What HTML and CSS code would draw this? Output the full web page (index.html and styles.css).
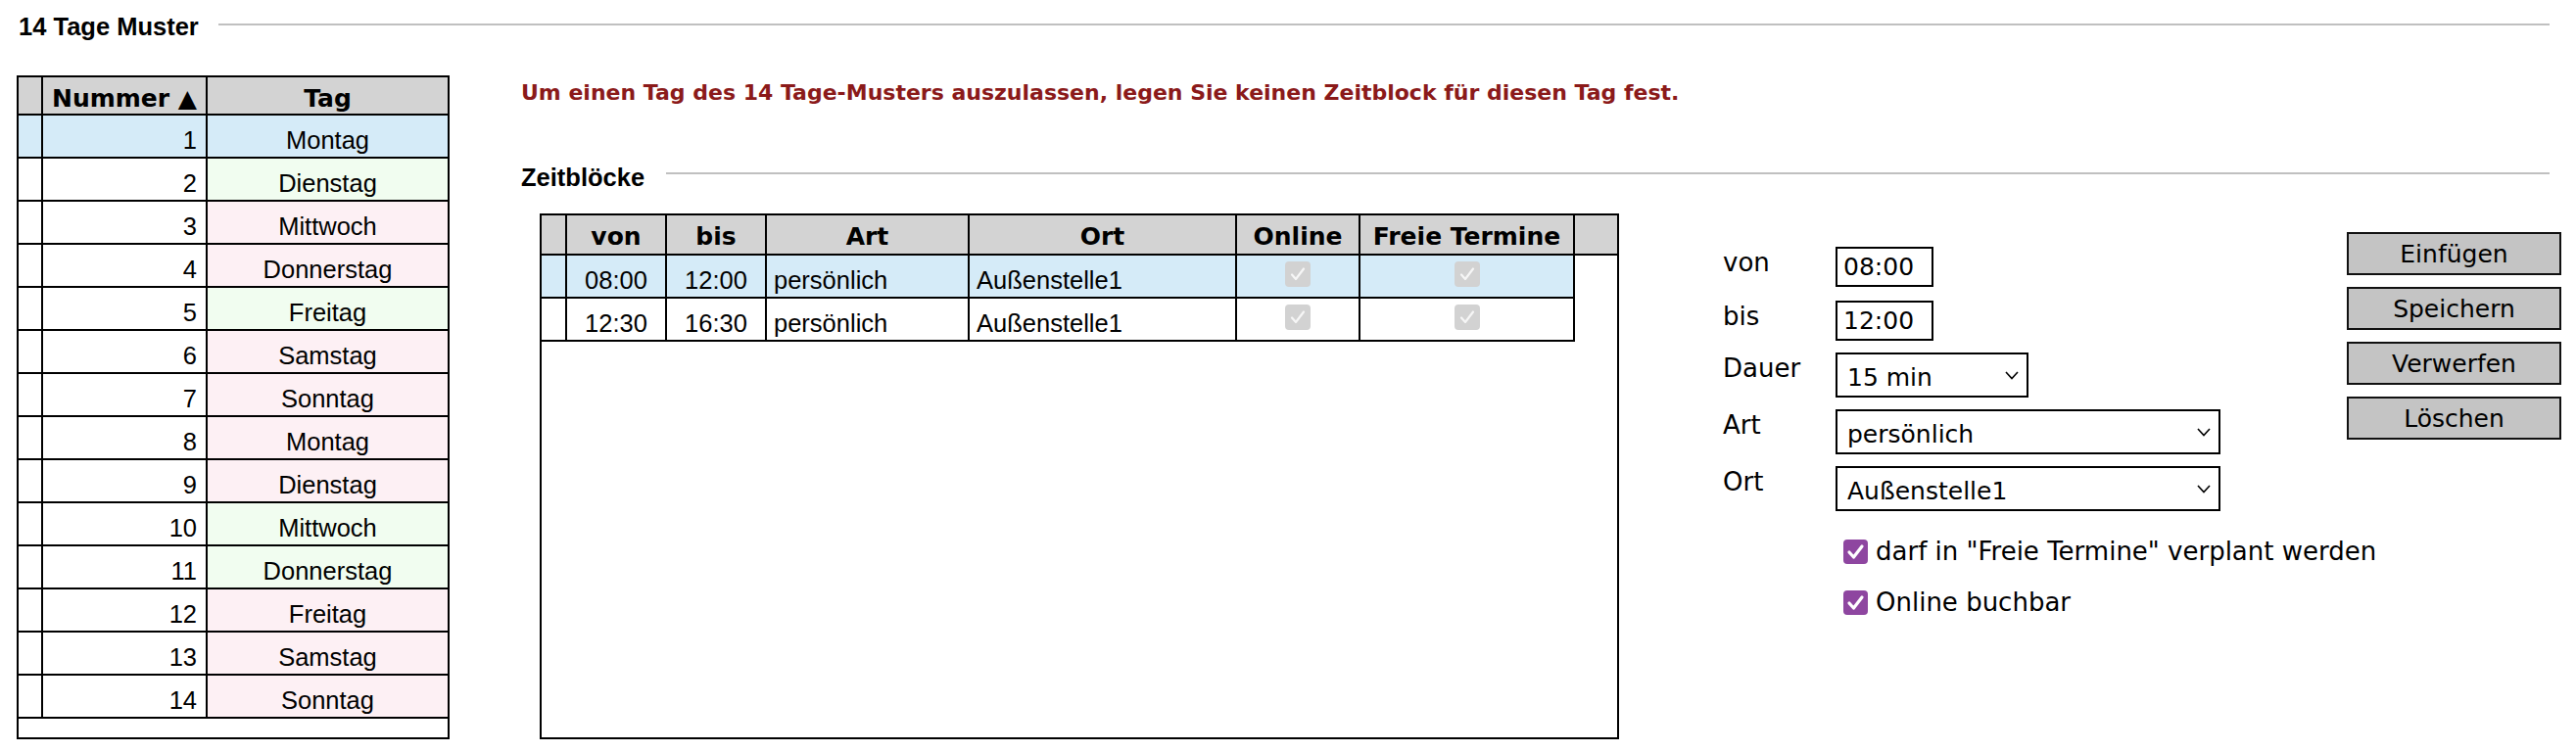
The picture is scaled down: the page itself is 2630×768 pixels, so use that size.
FILE: index.html
```html
<!DOCTYPE html>
<html lang="de">
<head>
<meta charset="utf-8">
<title>14 Tage Muster</title>
<link rel="stylesheet" href="styles.css">
</head>
<body>
<div class="page">
  <div class="legend-row top">
    <span class="legend">14 Tage Muster</span><span class="rule"></span>
  </div>
  <div class="main">
    <div class="days">
      <table class="grid days-table">
        <thead>
          <tr><th class="c-sel"></th><th class="c-num">Nummer ▲</th><th class="c-tag last">Tag</th></tr>
        </thead>
        <tbody>
          <tr class="selected"><td></td><td class="num">1</td><td class="tag last">Montag</td></tr>
          <tr><td></td><td class="num">2</td><td class="tag last green">Dienstag</td></tr>
          <tr><td></td><td class="num">3</td><td class="tag last pink">Mittwoch</td></tr>
          <tr><td></td><td class="num">4</td><td class="tag last pink">Donnerstag</td></tr>
          <tr><td></td><td class="num">5</td><td class="tag last green">Freitag</td></tr>
          <tr><td></td><td class="num">6</td><td class="tag last pink">Samstag</td></tr>
          <tr><td></td><td class="num">7</td><td class="tag last pink">Sonntag</td></tr>
          <tr><td></td><td class="num">8</td><td class="tag last pink">Montag</td></tr>
          <tr><td></td><td class="num">9</td><td class="tag last pink">Dienstag</td></tr>
          <tr><td></td><td class="num">10</td><td class="tag last green">Mittwoch</td></tr>
          <tr><td></td><td class="num">11</td><td class="tag last green">Donnerstag</td></tr>
          <tr><td></td><td class="num">12</td><td class="tag last pink">Freitag</td></tr>
          <tr><td></td><td class="num">13</td><td class="tag last pink">Samstag</td></tr>
          <tr><td></td><td class="num">14</td><td class="tag last pink">Sonntag</td></tr>
        </tbody>
      </table>
    </div>

    <div class="right">
      <p class="hint">Um einen Tag des 14 Tage-Musters auszulassen, legen Sie keinen Zeitblock für diesen Tag fest.</p>

      <div class="legend-row sub">
        <span class="legend">Zeitblöcke</span><span class="rule"></span>
      </div>

      <div class="blocks-area">
        <div class="blocks">
          <table class="grid blocks-head">
            <tr>
              <th class="b-sel"></th><th class="b-von">von</th><th class="b-bis">bis</th><th class="b-art">Art</th><th class="b-ort">Ort</th><th class="b-onl">Online</th><th class="b-frei">Freie Termine</th><th class="b-fill last"></th>
            </tr>
          </table>
          <table class="grid blocks-body">
            <tr class="selected">
              <td class="b-sel"></td><td class="b-von ctr">08:00</td><td class="b-bis ctr">12:00</td><td class="b-art txt">persönlich</td><td class="b-ort txt">Außenstelle1</td>
              <td class="b-onl ck"><span class="dis-box"><svg viewBox="0 0 26 26" width="26" height="26"><path d="M7 13.5 L11 18 L19 7.5" fill="none" stroke="#f6f6f6" stroke-width="2.2" stroke-linecap="round" stroke-linejoin="round"/></svg></span></td>
              <td class="b-frei ck"><span class="dis-box"><svg viewBox="0 0 26 26" width="26" height="26"><path d="M7 13.5 L11 18 L19 7.5" fill="none" stroke="#f6f6f6" stroke-width="2.2" stroke-linecap="round" stroke-linejoin="round"/></svg></span></td>
            </tr>
            <tr>
              <td class="b-sel"></td><td class="b-von ctr">12:30</td><td class="b-bis ctr">16:30</td><td class="b-art txt">persönlich</td><td class="b-ort txt">Außenstelle1</td>
              <td class="b-onl ck"><span class="dis-box"><svg viewBox="0 0 26 26" width="26" height="26"><path d="M7 13.5 L11 18 L19 7.5" fill="none" stroke="#f6f6f6" stroke-width="2.2" stroke-linecap="round" stroke-linejoin="round"/></svg></span></td>
              <td class="b-frei ck"><span class="dis-box"><svg viewBox="0 0 26 26" width="26" height="26"><path d="M7 13.5 L11 18 L19 7.5" fill="none" stroke="#f6f6f6" stroke-width="2.2" stroke-linecap="round" stroke-linejoin="round"/></svg></span></td>
            </tr>
          </table>
        </div>

        <div class="form">
          <div class="frow"><span class="flabel">von</span><input class="inp" type="text" value="08:00"></div>
          <div class="frow"><span class="flabel">bis</span><input class="inp" type="text" value="12:00"></div>
          <div class="frow r-sel"><span class="flabel">Dauer</span>
            <div class="select s-short"><span class="sval">15 min</span><svg class="chev" viewBox="0 0 14 9" width="14" height="9"><path d="M1 1 L7 7.5 L13 1" fill="none" stroke="#000" stroke-width="1.6"/></svg></div>
          </div>
          <div class="frow r-sel"><span class="flabel">Art</span>
            <div class="select s-long"><span class="sval">persönlich</span><svg class="chev" viewBox="0 0 14 9" width="14" height="9"><path d="M1 1 L7 7.5 L13 1" fill="none" stroke="#000" stroke-width="1.6"/></svg></div>
          </div>
          <div class="frow r-sel"><span class="flabel">Ort</span>
            <div class="select s-long"><span class="sval">Außenstelle1</span><svg class="chev" viewBox="0 0 14 9" width="14" height="9"><path d="M1 1 L7 7.5 L13 1" fill="none" stroke="#000" stroke-width="1.6"/></svg></div>
          </div>
          <div class="crow c1"><span class="cbox"><svg viewBox="0 0 25 25" width="25" height="25"><path d="M6 13 L10.5 18 L19 7" fill="none" stroke="#fff" stroke-width="3.2" stroke-linecap="round" stroke-linejoin="round"/></svg></span><span class="clabel">darf in "Freie Termine" verplant werden</span></div>
          <div class="crow c2"><span class="cbox"><svg viewBox="0 0 25 25" width="25" height="25"><path d="M6 13 L10.5 18 L19 7" fill="none" stroke="#fff" stroke-width="3.2" stroke-linecap="round" stroke-linejoin="round"/></svg></span><span class="clabel">Online buchbar</span></div>
        </div>

        <div class="buttons">
          <button class="btn" type="button">Einfügen</button>
          <button class="btn" type="button">Speichern</button>
          <button class="btn" type="button">Verwerfen</button>
          <button class="btn" type="button">Löschen</button>
        </div>
      </div>
    </div>
  </div>
</div>
</body>
</html>
```
FILE: styles.css
```css
* { box-sizing: border-box; }

body {
  margin: 0;
  background: #fff;
  color: #000;
  font-family: "Liberation Sans", Arial, sans-serif;
}

.page {
  padding: 12px 15px 0 0;
}

/* legend rows (title + rule) */
.legend-row {
  display: flex;
  align-items: flex-start;
  margin-right: 12px;
}
.legend {
  font: bold 25.5px/30px "Liberation Sans", Arial, sans-serif;
  white-space: nowrap;
}
.rule {
  flex: 1;
  height: 2px;
  background: #c0c0c0;
  margin: 12px 0 0 20px;
}
.top { padding-left: 19px; }

.main {
  display: flex;
  align-items: flex-start;
  margin-top: 35px;
}

/* generic grid tables */
.grid {
  border-collapse: separate;
  border-spacing: 0;
  table-layout: fixed;
}
.grid th,
.grid td {
  padding: 0;
  border-right: 2px solid #000;
  border-bottom: 2px solid #000;
  overflow: hidden;
  white-space: nowrap;
}
.grid th {
  background: #d3d3d3;
  font: bold 25px/31px "DejaVu Sans", Verdana, sans-serif;
  padding-top: 6px;
  text-align: center;
}
.grid td {
  font: 25.5px/34px "Liberation Sans", Arial, sans-serif;
  padding-top: 8px;
  background: #fff;
}
.grid .last { border-right: none; }
.grid tr.selected td { background: #d5ebf8; }
.grid td.green { background: #f1fdf0; }
.grid td.pink { background: #fdf0f4; }

/* 14 days table */
.days {
  flex: none;
  margin-left: 17px;
  width: 442px;
  height: 678px;
  border: 2px solid #000;
  overflow: hidden;
}
.days-table { width: 438px; }
.c-sel { width: 25px; }
.c-num { width: 168px; }
.c-tag { width: 245px; }
.grid td.num { text-align: right; padding-right: 9px; }
.tag { text-align: center; }

/* right column */
.right {
  flex: 1;
  min-width: 0;
  margin-left: 73px;
  padding-top: 5px;
}
.hint {
  margin: 0;
  font: bold 22px/26px "DejaVu Sans", Verdana, sans-serif;
  color: #8b1a1a;
  white-space: nowrap;
}
.sub { margin-top: 58px; }
.sub .rule { margin-top: 10px; margin-left: 22px; }

.blocks-area {
  display: flex;
  align-items: flex-start;
  margin-top: 22px;
}

/* Zeitblöcke grid */
.blocks {
  flex: none;
  margin-left: 19px;
  width: 1102px;
  height: 537px;
  border: 2px solid #000;
  overflow: hidden;
}
.blocks-head { width: 1098px; }
.grid.blocks-head th { line-height: 35px; padding-top: 4px; }
.blocks-body { width: 1055px; }
.b-sel { width: 26px; }
.b-von, .b-bis { width: 102px; }
.b-art { width: 207px; }
.b-ort { width: 273px; }
.b-onl { width: 126px; }
.b-frei { width: 219px; }
.b-fill { width: 43px; }
.ctr { text-align: center; }
.grid td.txt { padding-left: 7px; }

.grid td.ck {
  padding: 0;
  height: 44px;
  line-height: 0;
  vertical-align: middle;
}
.dis-box {
  display: block;
  width: 26px;
  height: 26px;
  margin: -4px auto 0;
  border-radius: 4px;
  background: #d2d2d2;
}
.dis-box svg { display: block; }

/* form */
.form {
  flex: none;
  width: 508px;
  margin-left: 106px;
  margin-top: 34px;
  font: 26px/30px "DejaVu Sans", Verdana, sans-serif;
}
.frow {
  display: flex;
  align-items: flex-start;
}
.frow + .frow { margin-top: 14px; }
.frow.r-sel { margin-top: 12px; }
.flabel {
  width: 115px;
  padding-top: 1px;
  line-height: 30px;
}
.inp {
  width: 100px;
  height: 41px;
  border: 2px solid #000;
  border-radius: 0;
  padding: 0 0 0 6px;
  margin: 0;
  font: 25px "DejaVu Sans", Verdana, sans-serif;
  color: #000;
  background: #fff;
  outline: none;
}
.select {
  display: flex;
  align-items: center;
  justify-content: space-between;
  height: 46px;
  border: 2px solid #000;
  padding: 0 8px 0 10px;
  font: 25px/30px "DejaVu Sans", Verdana, sans-serif;
  background: #fff;
}
.sval { padding-top: 5px; }
.s-short { width: 197px; }
.s-long { width: 393px; }
.chev { display: block; }

.crow {
  display: flex;
  align-items: center;
  margin-left: 123px;
  height: 30px;
  white-space: nowrap;
}
.crow.c1 { margin-top: 26px; }
.crow.c2 { margin-top: 22px; }
.cbox {
  flex: none;
  width: 25px;
  height: 25px;
  border-radius: 4px;
  background: #8e46a0;
  margin-right: 8px;
}
.cbox svg { display: block; }
.clabel { white-space: nowrap; }

/* buttons */
.buttons {
  flex: none;
  margin-left: auto;
  margin-top: 19px;
  width: 219px;
  display: flex;
  flex-direction: column;
  gap: 12px;
}
.btn {
  appearance: none;
  height: 44px;
  width: 219px;
  margin: 0;
  padding: 0;
  border: 2px solid #111;
  border-radius: 0;
  background: #c4c4c4;
  color: #000;
  font: 25px/1 "DejaVu Sans", Verdana, sans-serif;
  text-align: center;
}
```
